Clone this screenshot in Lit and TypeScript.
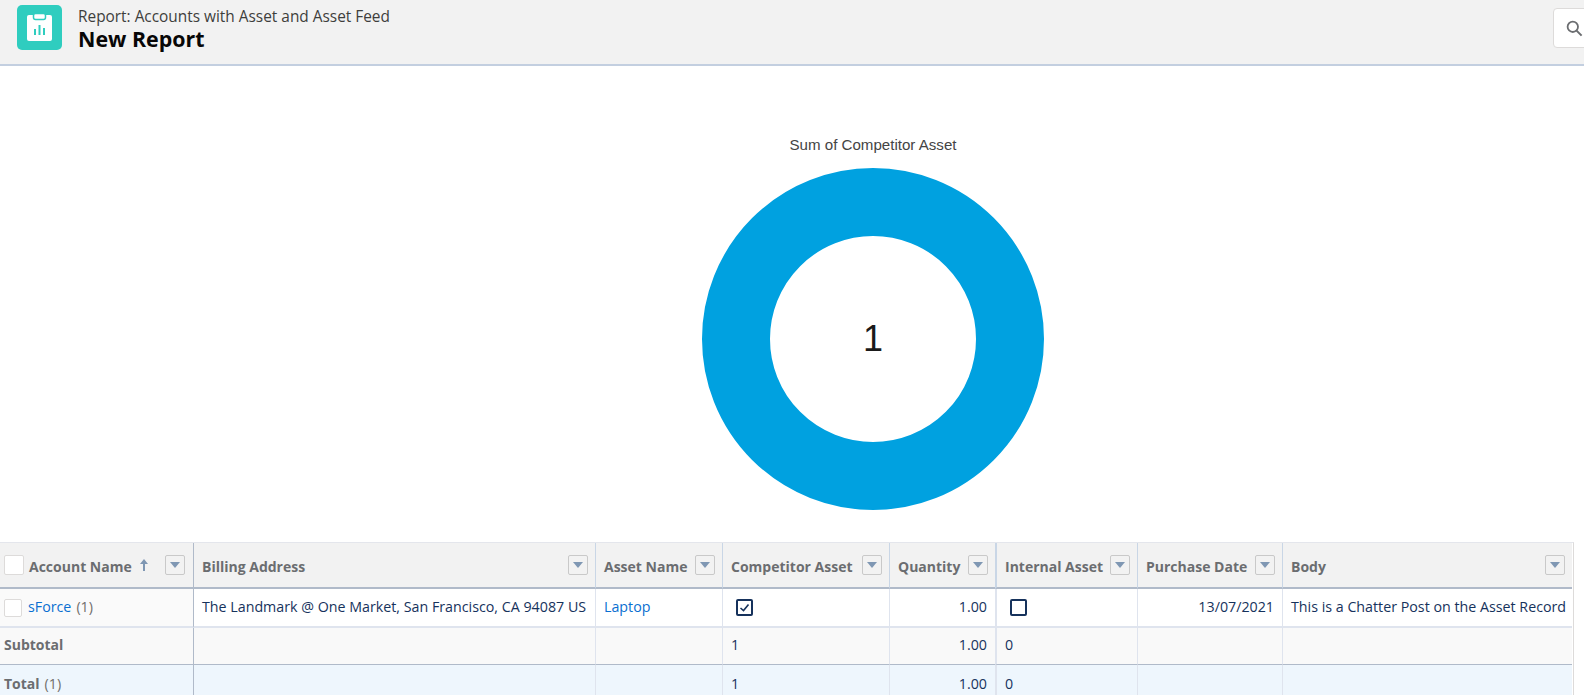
import { LitElement, html, css, svg } from 'lit';
import { customElement } from 'lit/decorators.js';

const columns = [
  { name: 'Billing Address', width: 402 },
  { name: 'Asset Name', width: 127 },
  { name: 'Competitor Asset', width: 167 },
  { name: 'Quantity', width: 106 },
  { name: 'Internal Asset', width: 142 },
  { name: 'Purchase Date', width: 145 },
  { name: 'Body', width: 290 },
];

const filterIcon = svg`<svg width="10" height="6" viewBox="0 0 10 6"><path d="M0 0h10L5 6z" fill="#7f97b3"/></svg>`;

@customElement('app-root')
export class AppRoot extends LitElement {
  static styles = css`
    :host {
      display: block;
      height: 695px;
      overflow: hidden;
      background: #fff;
      font-family: 'Open Sans', 'Noto Sans', sans-serif;
      font-size: 14.25px;
      color: #16325c;
    }

    .page-header {
      display: flex;
      align-items: center;
      height: 64px;
      background: #f2f2f2;
      border-bottom: 2px solid #c3cfe0;
      padding-left: 17px;
      overflow: hidden;
    }
    .logo {
      flex: none;
      display: block;
      margin: -9px 16px 0 0;
    }
    .titles {
      margin-top: -8px;
      flex: 1;
    }
    .eyebrow {
      font-size: 15.4px;
      line-height: 21px;
      color: #3e3e3c;
    }
    .title {
      font-size: 21.4px;
      line-height: 23px;
      font-weight: 700;
      color: #080707;
    }
    .search {
      flex: none;
      align-self: flex-start;
      display: flex;
      align-items: center;
      box-sizing: border-box;
      width: 40px;
      height: 40px;
      margin: 8px -9px 0 0;
      padding-left: 12px;
      background: #fff;
      border: 1px solid #dddbda;
      border-radius: 4px;
    }

    .chart {
      height: 476px;
      display: flex;
      flex-direction: column;
      align-items: center;
      padding: 69px 0 0 162px;
      box-sizing: border-box;
    }
    .chart-title {
      font-family: 'Liberation Sans', Arial, sans-serif;
      font-size: 15.1px;
      line-height: 20px;
      color: #444;
      margin-bottom: 12px;
    }
    .donut {
      display: block;
    }
    .donut text {
      font-family: 'Liberation Sans', Arial, sans-serif;
      font-size: 36px;
      fill: #1a1a1a;
    }

    .table-wrap {
      width: 1572px;
      padding-right: 1px;
      border-right: 1px solid #dddbda;
      border-top: 1px solid #e4e6ec;
    }
    table {
      border-collapse: separate;
      border-spacing: 0;
      table-layout: fixed;
      width: 1572px;
    }
    .col-account {
      width: 193px;
    }
    th,
    td {
      padding: 0 8px;
      white-space: nowrap;
      overflow: hidden;
      border-left: 1px solid #dfe4ee;
      text-align: left;
      font-weight: 400;
    }
    th:first-child,
    td:first-child {
      border-left: 0;
      padding-left: 4px;
      padding-right: 0;
    }
    th:nth-child(2),
    td:nth-child(2) {
      border-left-color: #b0bac9;
    }
    th:nth-child(6),
    td:nth-child(6) {
      border-left-width: 2px;
    }
    th {
      height: 44px;
      background: #f2f2f2;
      border-bottom: 2px solid #b0bac9;
      border-left-color: #c9d6e6;
      color: #6b6d70;
      font-size: 14px;
      font-weight: 700;
    }
    .head {
      display: flex;
      align-items: center;
      justify-content: space-between;
    }
    .head-name {
      display: flex;
      align-items: center;
    }
    .head-text {
      padding-top: 2px;
    }
    .filter {
      flex: none;
      display: flex;
      align-items: center;
      justify-content: center;
      box-sizing: border-box;
      width: 20px;
      height: 20px;
      margin-right: -1px;
      border: 1px solid #c9c9c9;
      border-radius: 2px;
    }
    th:first-child .filter {
      margin-right: 8px;
    }
    .sort {
      display: block;
      margin-left: 7px;
    }
    .check {
      flex: none;
      box-sizing: border-box;
      background: #fff;
      border: 1px solid #dddbda;
      border-radius: 2px;
      margin-right: 6px;
    }
    .check.large {
      width: 20px;
      height: 20px;
      margin-right: 5px;
    }
    .check.small {
      width: 18px;
      height: 18px;
      margin-top: 2px;
    }
    .row td {
      height: 35px;
      padding-bottom: 2px;
      background: #fff;
      border-bottom: 2px solid #dfe4ee;
    }
    .row td:first-child {
      background: #fafafa;
    }
    .row-name {
      display: flex;
      align-items: center;
    }
    a {
      color: #0a6fd1;
      text-decoration: none;
    }
    .count {
      color: #706e6b;
      margin-left: 5px;
    }
    .num {
      text-align: right;
    }
    .box {
      display: block;
      margin: 2px 0 0 5px;
    }
    .subtotal td {
      height: 33px;
      padding-bottom: 3px;
      background: #f9f9f9;
      border-bottom: 1px solid #b0bac9;
    }
    .total td {
      height: 36px;
      padding-bottom: 2px;
      background: #eef6fd;
    }
    .label {
      font-weight: 700;
      font-size: 14px;
      color: #6b6d70;
    }
  `;

  private checkbox(checked: boolean) {
    return html`<svg class="box" width="17" height="17" viewBox="0 0 17 17">
      <rect x="1" y="1" width="15" height="15" rx="1" fill="#fff" stroke="#16325c" stroke-width="2" />
      ${checked ? svg`<path d="M4.5 9l3 2.5 5-6" fill="none" stroke="#16325c" stroke-width="1.6" />` : ''}
    </svg>`;
  }

  private summary(cls: string, label: unknown) {
    return html`<tr class=${cls}>
      <td>${label}</td>
      <td></td>
      <td></td>
      <td>1</td>
      <td class="num">1.00</td>
      <td>0</td>
      <td></td>
      <td></td>
    </tr>`;
  }

  render() {
    return html`
      <header class="page-header">
        <svg class="logo" width="45" height="45" viewBox="0 0 45 45">
          <rect width="45" height="45" rx="5" fill="#2fcdbf" />
          <path d="M10 12a2 2 0 0 1 2-2h21a2 2 0 0 1 2 2v22a2 2 0 0 1-2 2H12a2 2 0 0 1-2-2z" fill="#fff" />
          <rect x="16.5" y="8.5" width="12" height="6" rx="2" fill="#fff" stroke="#2fcdbf" stroke-width="1.5" />
          <path d="M17 24h2v6h-2zM21.5 20h2v10h-2zM26 23h2v7h-2z" fill="#2fcdbf" />
        </svg>
        <div class="titles">
          <div class="eyebrow">Report: Accounts with Asset and Asset Feed</div>
          <div class="title">New Report</div>
        </div>
        <div class="search">
          <svg width="17" height="17" viewBox="0 0 17 17">
            <circle cx="6.8" cy="6.8" r="5.2" fill="none" stroke="#6b6d70" stroke-width="1.8" />
            <path d="M10.6 10.6l5 5" stroke="#6b6d70" stroke-width="2" />
          </svg>
        </div>
      </header>

      <section class="chart">
        <div class="chart-title">Sum of Competitor Asset</div>
        <svg class="donut" width="344" height="344" viewBox="0 0 344 344">
          <circle cx="172" cy="172" r="137" fill="none" stroke="#00a1e0" stroke-width="68" />
          <text x="172" y="184" text-anchor="middle">1</text>
        </svg>
      </section>

      <div class="table-wrap">
        <table>
          <colgroup>
            <col class="col-account" />
            ${columns.map((c) => html`<col style="width: ${c.width}px" />`)}
          </colgroup>
          <thead>
            <tr>
              <th>
                <div class="head">
                  <span class="head-name">
                    <span class="check large"></span><span class="head-text">Account Name</span>
                    <svg class="sort" width="10" height="12" viewBox="0 0 10 12">
                      <path d="M5 0l4 5H6v7H4V5H1z" fill="#7f97b3" />
                    </svg>
                  </span>
                  <span class="filter">${filterIcon}</span>
                </div>
              </th>
              ${columns.map(
                (c) => html`<th>
                  <div class="head"><span class="head-text">${c.name}</span><span class="filter">${filterIcon}</span></div>
                </th>`,
              )}
            </tr>
          </thead>
          <tbody>
            <tr class="row">
              <td>
                <div class="row-name">
                  <span class="check small"></span><a>sForce</a><span class="count">(1)</span>
                </div>
              </td>
              <td>The Landmark @ One Market, San Francisco, CA 94087 US</td>
              <td><a>Laptop</a></td>
              <td>${this.checkbox(true)}</td>
              <td class="num">1.00</td>
              <td>${this.checkbox(false)}</td>
              <td class="num">13/07/2021</td>
              <td>This is a Chatter Post on the Asset Record</td>
            </tr>
            ${this.summary('subtotal', html`<span class="label">Subtotal</span>`)}
            ${this.summary('total', html`<span class="label">Total</span><span class="count">(1)</span>`)}
          </tbody>
        </table>
      </div>
    `;
  }
}
